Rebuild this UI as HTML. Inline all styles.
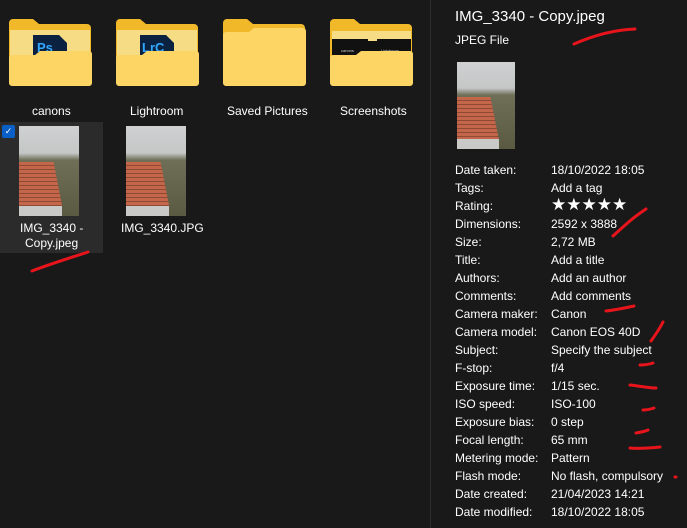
<!DOCTYPE html>
<html><head><style>
body{margin:0;width:687px;height:528px;background:#191919;font-family:"Liberation Sans","DejaVu Sans",sans-serif;color:#fff;position:relative;overflow:hidden;font-size:12px}
.a{position:absolute}
.lbl{position:absolute;font-size:12px;color:#fff;white-space:nowrap}
.photo{position:absolute;overflow:hidden;background:linear-gradient(#cfd1d2 0%,#c4c7c6 30%,#6f6e57 38%,#5a5a42 100%)}
.photo .roof{position:absolute;left:0;width:72%;background:repeating-linear-gradient(#c3664a 0 3px,#8e4a36 3px 4px);clip-path:polygon(0 0,80% 0,100% 100%,0 100%)}
.photo .wall{position:absolute;left:0;width:72%;bottom:0;background:#c9cac7}
.row{position:absolute;left:455px;font-size:12px;color:#fff}
.row span{position:absolute;left:96px;white-space:nowrap}
</style></head><body>
<svg class="a" style="left:0;top:0" width="420" height="95">
 <g><path d="M9 28 v-5 a4 4 0 0 1 4-4 h20 l6 5 h48 a4 4 0 0 1 4 4 v54 a3 3 0 0 1-3 3 h-76 a3 3 0 0 1-3-3z" fill="#f1b929"/>
 <rect x="10" y="30" width="80" height="30" fill="#f7dc86"/>
 <path d="M33 35 h26 l8 8 v17 h-34z" fill="#0b2140"/><text x="37" y="52" fill="#31a8ff" font-size="13" font-weight="bold" font-family="Liberation Sans">Ps</text>
 <path d="M9 86 v-28 a3 3 0 0 1 3-3 h23 l5-4 h49 a3 3 0 0 1 3 3 v29 a3 3 0 0 1-3 3 h-77 a3 3 0 0 1-3-3z" fill="#fcd565"/></g>
 <g transform="translate(107,0)"><path d="M9 28 v-5 a4 4 0 0 1 4-4 h20 l6 5 h48 a4 4 0 0 1 4 4 v54 h-82z" fill="#f1b929"/>
 <rect x="10" y="30" width="80" height="30" fill="#f7dc86"/>
 <path d="M33 35 h26 l8 8 v17 h-34z" fill="#0b2140"/><text x="35" y="52" fill="#31a8ff" font-size="13" font-weight="bold" font-family="Liberation Sans">LrC</text>
 <path d="M9 86 v-28 a3 3 0 0 1 3-3 h23 l5-4 h49 a3 3 0 0 1 3 3 v29 a3 3 0 0 1-3 3 h-77 a3 3 0 0 1-3-3z" fill="#fcd565"/></g>
 <g transform="translate(214,0)"><path d="M9 28 v-5 a4 4 0 0 1 4-4 h20 l6 5 h48 a4 4 0 0 1 4 4 v54 h-82z" fill="#f1b929"/>
 <path d="M9 86 v-51 a3 3 0 0 1 3-3 h23 l5-4 h49 a3 3 0 0 1 3 3 v52 a3 3 0 0 1-3 3 h-77 a3 3 0 0 1-3-3z" fill="#fcd565"/></g>
 <g transform="translate(321,0)"><path d="M9 28 v-5 a4 4 0 0 1 4-4 h20 l6 5 h48 a4 4 0 0 1 4 4 v54 h-82z" fill="#f1b929"/>
 <rect x="11" y="31" width="79" height="25" fill="#111"/><rect x="47" y="31" width="9" height="10" fill="#f7dc86"/><rect x="11" y="31" width="36" height="8" fill="#f7dc86"/><rect x="56" y="31" width="34" height="8" fill="#f7dc86"/>
 <text x="20" y="52" font-size="4" fill="#ccc">canons</text><text x="60" y="52" font-size="4" fill="#ccc">Lightroom</text>
 <path d="M9 86 v-28 a3 3 0 0 1 3-3 h23 l5-4 h49 a3 3 0 0 1 3 3 v29 a3 3 0 0 1-3 3 h-77 a3 3 0 0 1-3-3z" fill="#fcd565"/></g>
</svg>
<div class="lbl" style="left:32px;top:104px">canons</div>
<div class="lbl" style="left:130px;top:104px">Lightroom</div>
<div class="lbl" style="left:227px;top:104px">Saved Pictures</div>
<div class="lbl" style="left:340px;top:104px">Screenshots</div>
<div class="a" style="left:0;top:122px;width:103px;height:131px;background:#2b2b2b"></div>
<div class="a" style="left:2px;top:125px;width:13px;height:13px;background:#0a5fc7;border-radius:2px;color:#fff;font-size:9px;text-align:center;line-height:13px">✓</div>
<div class="photo" style="left:19px;top:126px;width:60px;height:90px"><div class="roof" style="top:36px;height:44px"></div><div class="wall" style="height:10px"></div></div>
<div class="photo" style="left:126px;top:126px;width:60px;height:90px"><div class="roof" style="top:36px;height:44px"></div><div class="wall" style="height:10px"></div></div>
<div class="lbl" style="left:20px;top:221px">IMG_3340 -</div>
<div class="lbl" style="left:25px;top:236px">Copy.jpeg</div>
<div class="lbl" style="left:121px;top:221px">IMG_3340.JPG</div>
<div class="a" style="left:430px;top:0;width:1px;height:528px;background:#2d2d2d"></div>
<div class="lbl" style="left:455px;top:8px;font-size:15px">IMG_3340 - Copy.jpeg</div>
<div class="lbl" style="left:455px;top:33px;font-size:12px">JPEG File</div>
<div class="photo" style="left:457px;top:62px;width:58px;height:87px"><div class="roof" style="top:35px;height:42px"></div><div class="wall" style="height:10px"></div></div>
<div class="row" style="top:163px">Date taken:<span>18/10/2022 18:05</span></div>
<div class="row" style="top:181px">Tags:<span>Add a tag</span></div>
<div class="row" style="top:199px">Rating:<span style="font-size:17px;top:-4px;letter-spacing:0px">★★★★★</span></div>
<div class="row" style="top:217px">Dimensions:<span>2592 x 3888</span></div>
<div class="row" style="top:235px">Size:<span>2,72 MB</span></div>
<div class="row" style="top:253px">Title:<span>Add a title</span></div>
<div class="row" style="top:271px">Authors:<span>Add an author</span></div>
<div class="row" style="top:289px">Comments:<span>Add comments</span></div>
<div class="row" style="top:307px">Camera maker:<span>Canon</span></div>
<div class="row" style="top:325px">Camera model:<span>Canon EOS 40D</span></div>
<div class="row" style="top:343px">Subject:<span>Specify the subject</span></div>
<div class="row" style="top:361px">F-stop:<span>f/4</span></div>
<div class="row" style="top:379px">Exposure time:<span>1/15 sec.</span></div>
<div class="row" style="top:397px">ISO speed:<span>ISO-100</span></div>
<div class="row" style="top:415px">Exposure bias:<span>0 step</span></div>
<div class="row" style="top:433px">Focal length:<span>65 mm</span></div>
<div class="row" style="top:451px">Metering mode:<span>Pattern</span></div>
<div class="row" style="top:469px">Flash mode:<span>No flash, compulsory</span></div>
<div class="row" style="top:487px">Date created:<span>21/04/2023 14:21</span></div>
<div class="row" style="top:505px">Date modified:<span>18/10/2022 18:05</span></div>
<svg class="a" style="left:0;top:0" width="687" height="528" fill="none" stroke="#e8141b" stroke-width="3" stroke-linecap="round">
 <path d="M32 271 C50 264 70 258 88 252"/>
 <path d="M574 44 C590 37 610 30 635 29"/>
 <path d="M613 236 C625 225 635 216 646 209"/>
 <path d="M606 311 C615 310 625 308 634 306"/>
 <path d="M651 341 C656 334 660 328 663 322"/>
 <path d="M640 365 C646 365 650 364 653 363"/>
 <path d="M630 385 C640 386 648 388 656 388"/>
 <path d="M643 410 C648 410 651 409 654 408"/>
 <path d="M636 433 C642 432 646 431 648 430"/>
 <path d="M630 448 C640 449 650 448 660 447"/>
 <path d="M675 477 l1 0"/>
</svg>
</body></html>
